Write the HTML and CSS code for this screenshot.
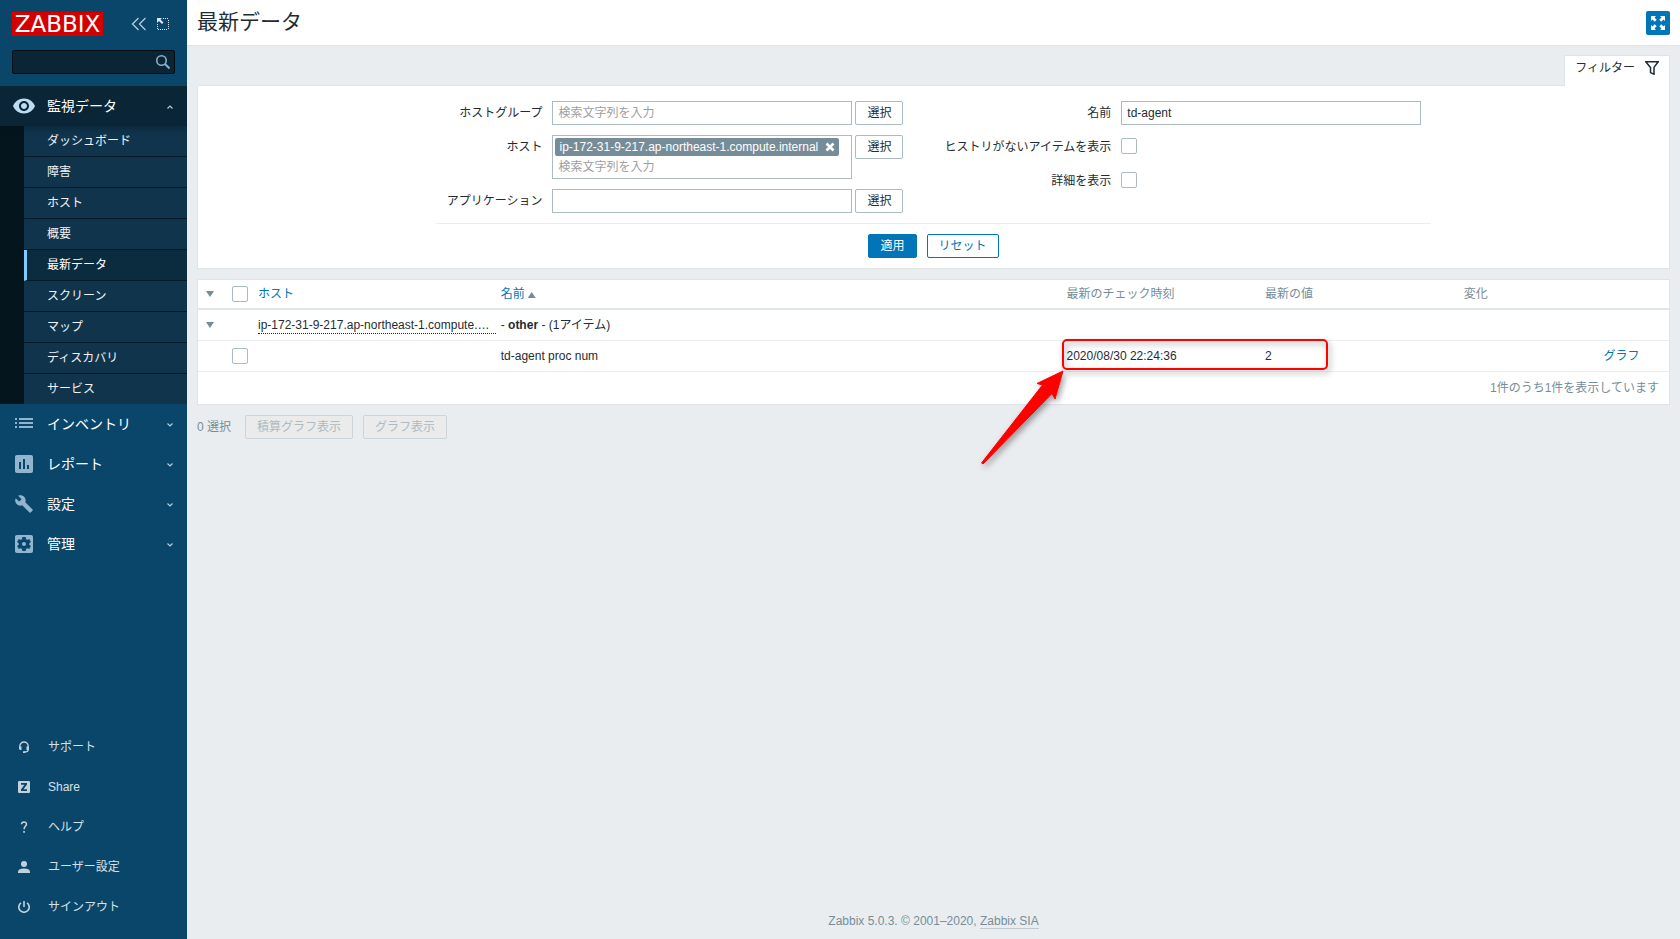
FILE: index.html
```html
<!DOCTYPE html>
<html lang="ja">
<head>
<meta charset="utf-8">
<title>最新データ</title>
<link rel="stylesheet" href="styles.css">
</head>
<body>
<aside class="sidebar">
  <div class="brand">
    <a class="logo" href="#">ZABBIX</a>
    <button class="icon-button collapse" type="button" aria-label="サイドバーを折りたたむ">
      <svg width="16" height="16" viewBox="0 0 16 16"><path d="M7.500 2 1.500 8l6 6M14.500 2l-6 6 6 6" fill="none" stroke="currentColor" stroke-width="1.300"/></svg>
    </button>
    <button class="icon-button" type="button" aria-label="サイドバーを隠す">
      <svg width="14" height="14" viewBox="0 0 14 14"><path d="M7 1h1v1H7zM9 1h1v1H9zM11 1h1v1h-1zM12 3h1v1h-1zM12 5h1v1h-1zM12 7h1v1h-1zM12 9h1v1h-1zM12 11h1v1h-1zM1 7h1v1H1zM1 9h1v1H1zM1 11h1v1H1zM2 12h1v1H2zM4 12h1v1H4zM6 12h1v1H6zM8 12h1v1H8zM10 12h1v1h-1z" fill="#dbe8f1"/><path d="M1 1h5L4.500 2.500 7.500 5.500 6 7 3 4 1 6z" fill="#dbe8f1"/></svg>
    </button>
  </div>
  <form class="search">
    <input type="text" aria-label="検索">
    <button type="button" aria-label="検索実行"><svg width="16" height="16" viewBox="0 0 16 16"><circle cx="7.500" cy="6.500" r="4.700" fill="none" stroke="currentColor" stroke-width="1.600"/><path d="M11 10l4.500 4.500" stroke="currentColor" stroke-width="2"/></svg></button>
  </form>
  <nav class="menu">
    <a class="menu-item open" href="#">
      <svg class="menu-icon" viewBox="0 0 24 24"><path d="M12 4.500C7 4.500 2.730 7.610 1 12c1.730 4.390 6 7.500 11 7.500s9.270-3.110 11-7.500c-1.730-4.390-6-7.500-11-7.500zM12 17c-2.760 0-5-2.240-5-5s2.240-5 5-5 5 2.240 5 5-2.240 5-5 5zm0-8c-1.660 0-3 1.340-3 3s1.340 3 3 3 3-1.340 3-3-1.340-3-3-3z"/></svg>
      <span>監視データ</span>
      <svg class="chevron" viewBox="0 0 8 8"><path d="M1.500 6.500l2.500-2.500 2.500 2.500"/></svg>
    </a>
    <div class="submenu">
      <a href="#">ダッシュボード</a>
      <a href="#">障害</a>
      <a href="#">ホスト</a>
      <a href="#">概要</a>
      <a class="selected" href="#">最新データ</a>
      <a href="#">スクリーン</a>
      <a href="#">マップ</a>
      <a href="#">ディスカバリ</a>
      <a href="#">サービス</a>
    </div>
    <a class="menu-item" href="#">
      <svg class="menu-icon" viewBox="0 0 24 24"><path d="M3 6h2v2H3zM3 10h2v2H3zM3 14h2v2H3zM7 6h14v2H7zM7 10h14v2H7zM7 14h14v2H7z"/></svg>
      <span>インベントリ</span>
      <svg class="chevron" viewBox="0 0 8 8"><path d="M1.500 3.500l2.500 2.500 2.500-2.500"/></svg>
    </a>
    <a class="menu-item" href="#">
      <svg class="menu-icon" viewBox="0 0 24 24"><path d="M19 3H5c-1.100 0-2 .9-2 2v14c0 1.100.9 2 2 2h14c1.100 0 2-.9 2-2V5c0-1.100-.9-2-2-2zM9 17H7v-7h2v7zm4 0h-2V7h2v10zm4 0h-2v-4h2v4z"/></svg>
      <span>レポート</span>
      <svg class="chevron" viewBox="0 0 8 8"><path d="M1.500 3.500l2.500 2.500 2.500-2.500"/></svg>
    </a>
    <a class="menu-item" href="#">
      <svg class="menu-icon" viewBox="-3 -3 30 30"><path d="M22.700 19l-9.100-9.100c.9-2.300.4-5-1.500-6.900-2-2-5-2.400-7.400-1.300L9 6 6 9 1.600 4.700C.4 7.100.9 10.100 2.900 12.100c1.900 1.900 4.600 2.400 6.900 1.500l9.100 9.100c.4.400 1 .4 1.400 0l2.300-2.300c.5-.4.500-1.100.1-1.400z"/></svg>
      <span>設定</span>
      <svg class="chevron" viewBox="0 0 8 8"><path d="M1.500 3.500l2.500 2.500 2.500-2.500"/></svg>
    </a>
    <a class="menu-item" href="#">
      <svg class="menu-icon" viewBox="0 0 24 24"><path d="M12 10c-1.100 0-2 .9-2 2s.9 2 2 2 2-.9 2-2-.9-2-2-2zm7-7H5c-1.110 0-2 .9-2 2v14c0 1.100.890 2 2 2h14c1.110 0 2-.9 2-2V5c0-1.100-.890-2-2-2zm-1.750 9c0 .230-.020.460-.050.680l1.480 1.160c.130.110.170.300.080.450l-1.400 2.420c-.090.150-.270.210-.430.150l-1.740-.7c-.360.280-.760.510-1.180.690l-.260 1.850c-.030.170-.180.300-.350.300h-2.800c-.170 0-.320-.130-.350-.290l-.260-1.850c-.430-.180-.820-.410-1.180-.690l-1.740.7c-.160.060-.340 0-.430-.150l-1.400-2.420c-.090-.150-.050-.340.080-.450l1.480-1.160c-.030-.230-.050-.460-.050-.690s.020-.460.050-.680L5.320 10.160c-.130-.110-.170-.3-.080-.450l1.400-2.420c.090-.150.270-.210.430-.150l1.740.7c.360-.280.760-.510 1.180-.690l.260-1.850c.030-.170.180-.3.350-.3h2.800c.170 0 .320.130.350.290l.260 1.850c.430.180.820.410 1.180.690l1.740-.7c.160-.060.340 0 .430.150l1.400 2.420c.090.150.050.340-.080.450l-1.480 1.160c.030.230.050.460.050.690z"/></svg>
      <span>管理</span>
      <svg class="chevron" viewBox="0 0 8 8"><path d="M1.500 3.500l2.500 2.500 2.500-2.500"/></svg>
    </a>
  </nav>
  <nav class="user-menu">
    <a href="#"><svg viewBox="0 0 12 12"><path d="M1.800 8V5.200a4.200 4.200 0 0 1 8.400 0v3.300q0 2.500-4.200 2.700" fill="none" stroke="currentColor" stroke-width="1.300"/><path d="M1.200 5.500h2.300V9H2.200q-1 0-1-1zM8.500 5.500h2.300V9H8.500zM5 10.200h2.200V12H5z"/></svg><span>サポート</span></a>
    <a href="#"><svg viewBox="0 0 12 12"><path fill-rule="evenodd" d="M1 0h10q1 0 1 1v10q0 1-1 1H1q-1 0-1-1V1q0-1 1-1zM3 2v1.800h3.400L3 8.600V10h6V8.200H5.500L9 3.400V2z"/></svg><span>Share</span></a>
    <a href="#"><svg viewBox="0 0 12 12"><path d="M3.500 3.300Q3.600.9 6 .9t2.500 2.200Q8.500 4.300 7.300 5.300T6.100 8.300" fill="none" stroke="currentColor" stroke-width="1.500"/><path d="M5.200 10h1.700v1.800H5.200z"/></svg><span>ヘルプ</span></a>
    <a href="#"><svg viewBox="0 0 12 12"><circle cx="6" cy="3" r="3"/><path d="M0 12v-1.500Q.5 7.700 6 7.600q5.500.1 6 2.900V12z"/></svg><span>ユーザー設定</span></a>
    <a href="#"><svg viewBox="0 0 12 12"><path d="M3 1.800a5.200 5.200 0 1 0 6 0M6 0v6" fill="none" stroke="currentColor" stroke-width="1.600"/></svg><span>サインアウト</span></a>
  </nav>
</aside>

<div class="page">
  <header class="page-header">
    <h1>最新データ</h1>
    <button class="kiosk" type="button" aria-label="全画面表示">
      <svg width="14" height="14" viewBox="0 0 14 14"><path d="M0 0h5L3.500 1.500l2.200 2.200-2 2-2.200-2.200L0 5zM14 0v5l-1.500-1.500-2.200 2.200-2-2 2.200-2.200L9 0zM0 14V9l1.500 1.500 2.200-2.200 2 2-2.200 2.200L5 14zM14 14H9l1.500-1.500-2.200-2.200 2-2 2.200 2.200L14 9z" fill="#fff"/></svg>
    </button>
  </header>

  <main>
    <div class="tabs">
      <button class="filter-tab" type="button">フィルター
        <svg width="14" height="14" viewBox="0 0 14 14"><path d="M.8.8h12.400L9 6.400v6.800l-3.500-1.600V6.400z" fill="none" stroke="#1f2c33" stroke-width="1.500"/></svg>
      </button>
    </div>
    <form class="panel filter">
      <div class="filter-body">
        <div class="fields">
          <label for="groups">ホストグループ</label>
          <div class="control"><input class="text" id="groups" type="text" placeholder="検索文字列を入力"><button class="btn" type="button">選択</button></div>
          <label for="hosts">ホスト</label>
          <div class="control">
            <div class="multiselect">
              <span class="tag">ip-172-31-9-217.ap-northeast-1.compute.internal<button type="button" aria-label="削除"><svg width="10" height="10" viewBox="0 0 10 10"><path d="M1.500 1.500l7 7M8.500 1.500l-7 7" stroke="#fff" stroke-width="2.600"/></svg></button></span>
              <input id="hosts" type="text" placeholder="検索文字列を入力">
            </div>
            <button class="btn" type="button">選択</button>
          </div>
          <label for="app">アプリケーション</label>
          <div class="control"><input class="text" id="app" type="text"><button class="btn" type="button">選択</button></div>
        </div>
        <div class="fields">
          <label for="name">名前</label>
          <div class="control"><input class="text" id="name" type="text" value="td-agent"></div>
          <label for="nohistory">ヒストリがないアイテムを表示</label>
          <div class="control"><input class="check" id="nohistory" type="checkbox"></div>
          <label for="details">詳細を表示</label>
          <div class="control"><input class="check" id="details" type="checkbox"></div>
        </div>
        <div class="filter-buttons">
          <button class="btn primary" type="button">適用</button>
          <button class="btn outline" type="button">リセット</button>
        </div>
      </div>
    </form>

    <table class="panel data">
      <colgroup><col class="c-toggle"><col class="c-check"><col class="c-host"><col class="c-name"><col class="c-time"><col class="c-value"><col class="c-change"><col class="c-action"></colgroup>
      <thead>
        <tr>
          <th><button class="toggle" type="button" aria-label="すべて開閉"></button></th>
          <th><input class="check" type="checkbox" aria-label="すべて選択"></th>
          <th><a href="#">ホスト</a></th>
          <th><a href="#">名前<span class="sort"></span></a></th>
          <th>最新のチェック時刻</th>
          <th>最新の値</th>
          <th>変化</th>
          <th></th>
        </tr>
      </thead>
      <tbody>
        <tr>
          <td><button class="toggle" type="button" aria-label="開閉"></button></td>
          <td></td>
          <td class="host-cell"><a class="host" href="#">ip-172-31-9-217.ap-northeast-1.compute.…</a></td>
          <td colspan="5">- <b>other</b> - (1アイテム)</td>
        </tr>
        <tr>
          <td></td>
          <td><input class="check" type="checkbox" aria-label="td-agent proc num"></td>
          <td></td>
          <td>td-agent proc num</td>
          <td class="marked">2020/08/30 22:24:36
            <svg class="callout" width="360" height="140" viewBox="0 0 360 140" aria-hidden="true">
              <defs><filter id="shade" x="-20%" y="-20%" width="150%" height="150%"><feDropShadow dx="2" dy="3" stdDeviation="3" flood-color="#000" flood-opacity=".4"/></filter></defs>
              <rect x="82" y="9" width="264" height="29" rx="4" fill="none" stroke="#f00" stroke-width="2" filter="url(#shade)"/>
              <path d="M82 40 74 68 71 62.500 2 133 .5 132 61.500 54 56 52.500z" fill="#f00" stroke="#f00" filter="url(#shade)"/>
            </svg>
          </td>
          <td>2</td>
          <td></td>
          <td><a href="#">グラフ</a></td>
        </tr>
      </tbody>
      <tfoot>
        <tr><td colspan="8">1件のうち1件を表示しています</td></tr>
      </tfoot>
    </table>

    <div class="actions">
      <span>0 選択</span>
      <button class="btn" type="button" disabled>積算グラフ表示</button>
      <button class="btn" type="button" disabled>グラフ表示</button>
    </div>
  </main>

  <footer>Zabbix 5.0.3. © 2001–2020, <a href="#">Zabbix SIA</a></footer>
</div>
</body>
</html>
```
FILE: styles.css
```css
* { box-sizing: border-box; }
body {
  display: flex;
  min-height: 100vh;
  margin: 0;
  background: #e9edf0;
  color: #1f2c33;
  font: 12px/18px "Liberation Sans", "Noto Sans CJK JP", sans-serif;
}
a { color: #0275b8; text-decoration: none; }
button, input { font: inherit; color: inherit; }
button { cursor: pointer; }
svg { display: block; flex: none; }

/* Sidebar */
.sidebar {
  display: flex;
  flex-direction: column;
  flex: none;
  width: 187px;
  padding-bottom: 12px;
  background: #0a466a;
}
.brand { display: flex; align-items: center; height: 24px; margin: 12px 12px 14px; }
.logo {
  width: 91px;
  background: #d40000;
  color: #fff;
  font: 23px/24px "DejaVu Sans", sans-serif;
  text-align: center;
}
.icon-button { padding: 0; border: 0; background: none; color: #b4cbdc; }
.collapse { margin: 0 9px 0 28px; }
.search {
  display: flex;
  align-items: center;
  height: 24px;
  margin: 0 12px 12px;
  padding-right: 4px;
  border: 1px solid #030d13;
  border-radius: 2px;
  background: #0a2636;
}
.search input { flex: 1; min-width: 0; border: 0; background: none; color: #fff; outline: none; }
.search button { padding: 0; border: 0; background: none; color: #8ab0c8; }
.menu { overflow: hidden; }
.menu-item {
  display: flex;
  align-items: center;
  height: 40px;
  padding: 0 13px 0 12px;
  color: #fff;
  font-size: 14px;
}
.menu-item span { flex: 1; }
.menu-item.open { position: relative; background: #0a2636; box-shadow: 0 3px 6px rgba(4, 20, 30, .35); }
.menu-icon { width: 24px; height: 24px; margin-right: 11px; fill: #91b5cf; }
.open .menu-icon { fill: #bcdcf2; }
.chevron { width: 8px; height: 8px; fill: none; stroke: #b4cbdc; stroke-width: 1.200; }
.submenu { padding-left: 24px; background: #05151e; }
.submenu a {
  display: block;
  height: 31px;
  padding-left: 23px;
  border-bottom: 1px solid #051a26;
  background: #10344c;
  color: #f0f4f7;
  line-height: 30px;
}
.submenu a:last-child { height: 30px; border-bottom: 0; }
.submenu .selected { padding-left: 20px; border-left: 3px solid #80ccff; background: #0b2b3e; color: #fff; }
.user-menu { margin-top: auto; }
.user-menu a { display: flex; align-items: center; height: 40px; padding-left: 18px; color: #d5e1e9; }
.user-menu svg { width: 12px; height: 12px; margin-right: 18px; fill: currentColor; color: #c2d2dd; }

/* Page */
.page { display: flex; flex: 1; flex-direction: column; min-width: 0; }
.page-header {
  display: flex;
  align-items: center;
  justify-content: space-between;
  height: 46px;
  padding: 0 10px;
  border-bottom: 1px solid #dfe4e7;
  background: #fff;
}
h1 { margin: 0; padding-bottom: 2px; font-size: 21px; font-weight: normal; line-height: 24px; }
.kiosk {
  display: grid;
  place-items: center;
  width: 24px;
  height: 24px;
  padding: 0;
  border: 0;
  border-radius: 2px;
  background: #0275b8;
}
main { padding: 9px 10px 0; }
.tabs { display: flex; justify-content: flex-end; }
.filter-tab {
  display: flex;
  align-items: center;
  gap: 10px;
  height: 31px;
  margin-bottom: -1px;
  padding: 0 10px 6px;
  border: 1px solid #dfe4e7;
  border-bottom: 0;
  border-radius: 2px 2px 0 0;
  background: #fff;
  z-index: 1;
}
.panel { width: 100%; border: 1px solid #dfe4e7; background: #fff; }

/* Filter */
.filter { display: flex; justify-content: center; margin-bottom: 10px; padding: 15px 10px 10px; }
.filter-body { display: grid; grid-template-columns: auto auto; column-gap: 41px; }
.fields {
  display: grid;
  grid-template-columns: auto auto;
  gap: 10px;
  align-content: start;
  padding-left: 11px;
}
.fields + .fields { padding: 0 10px 0 0; }
.fields label { line-height: 24px; text-align: right; white-space: nowrap; }
.control { display: flex; align-items: flex-start; gap: 3px; min-height: 24px; }
.control > .check { margin-top: 3px; }
.text, .multiselect { width: 300px; border: 1px solid #acbbc2; background: #fff; }
.text { height: 24px; padding: 0 5px; }
.multiselect { padding: 2px; }
.multiselect input { display: block; width: 100%; height: 20px; padding: 1px 3px 0; border: 0; }
::placeholder { color: #a0a0a0; opacity: 1; }
.tag {
  display: inline-flex;
  align-items: center;
  gap: 7px;
  height: 18px;
  padding: 0 4px;
  border-radius: 2px;
  background: #768d99;
  color: #fff;
  vertical-align: top;
}
.tag button { padding: 0; border: 0; background: none; }
.check {
  appearance: none;
  display: block;
  width: 16px;
  height: 16px;
  margin: 0;
  border: 1px solid #acbbc2;
  border-radius: 2px;
  background: #fff;
}
.btn {
  height: 24px;
  padding: 0 11px;
  border: 1px solid #acbbc2;
  border-radius: 2px;
  background: #fff;
  line-height: 20px;
}
.primary { border-color: #0275b8; background: #0275b8; color: #fff; }
.outline { border-color: #0275b8; color: #0275b8; }
.btn:disabled { border-color: #ccd5d9; background: #ebebeb; color: #acbbc2; }
.filter-buttons {
  display: flex;
  grid-column: 1 / -1;
  justify-content: center;
  gap: 10px;
  margin-top: 10px;
  padding-top: 10px;
  border-top: 1px solid #ebeef0;
}

/* Table */
.data { table-layout: fixed; border-collapse: separate; border-spacing: 0; }
.c-toggle { width: 29px; }
.c-check { width: 26px; }
.c-host { width: 16.500%; }
.c-time, .c-value { width: 13.500%; }
.c-change { width: 9.500%; }
.c-action { width: 4.800%; }
th, td { height: 31px; padding: 0 5px; border-bottom: 1px solid #ebeef0; text-align: left; }
th { height: 30px; border-bottom: 2px solid #dfe4e7; color: #768d99; font-weight: normal; }
th:first-child, td:first-child { padding-left: 8px; }
tfoot td { height: 32px; padding-right: 10px; border: 0; color: #768d99; text-align: right; }
.toggle {
  display: block;
  width: 8px;
  height: 6px;
  padding: 0;
  border: 0;
  background: #768d99;
  clip-path: polygon(0 0, 100% 0, 50% 100%);
}
.sort {
  display: inline-block;
  width: 8px;
  height: 6px;
  margin-left: 3px;
  background: #768d99;
  clip-path: polygon(0 100%, 100% 100%, 50% 0);
}
.host-cell { padding-right: 0; }
.host {
  display: block;
  overflow: hidden;
  height: 17px;
  border-bottom: 1px dotted #1f2c33;
  color: inherit;
  line-height: 16px;
  text-overflow: ellipsis;
  white-space: nowrap;
}
.marked { position: relative; }
.callout { position: absolute; top: -10px; left: -81px; overflow: visible; pointer-events: none; }

.actions { display: flex; align-items: center; gap: 10px; margin-top: 10px; color: #768d99; }
.actions span { margin-right: 4px; }
footer { margin-top: auto; padding-bottom: 9px; color: #768d99; text-align: center; }
footer a { border-bottom: 1px solid #c0cad0; color: inherit; }
```
